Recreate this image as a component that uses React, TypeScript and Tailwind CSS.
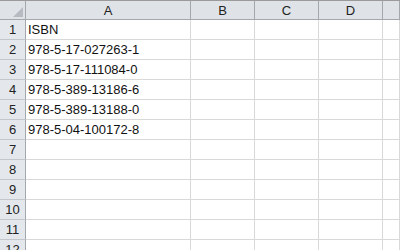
const cols = ["A", "B", "C", "D", ""];
const widths = ["w-[165px]", "w-[64px]", "w-[64px]", "w-[64px]", "flex-1"];

const rows: string[] = [
  "ISBN",
  "978-5-17-027263-1",
  "978-5-17-111084-0",
  "978-5-389-13186-6",
  "978-5-389-13188-0",
  "978-5-04-100172-8",
  "",
  "",
  "",
  "",
  "",
  "",
];

export default function App() {
  return (
    <div className="w-[400px] h-[250px] overflow-hidden bg-white font-['Liberation_Sans',Arial,sans-serif] text-[13px] text-[#111]">
      {/* Column headers */}
      <div className="flex h-[20px] border-t border-[#9a9a9a]">
        <div className="relative w-[26px] shrink-0 border-r border-b border-[#a3a8ae] bg-[#dfe3e8]">
          <svg className="absolute right-[2px] bottom-[2px]" width="10" height="10" viewBox="0 0 10 10">
            <polygon points="0,10 10,10 10,0" fill="#b6bbc1" />
          </svg>
        </div>
        {cols.map((c, i) => (
          <div
            key={i}
            className={`${widths[i]} shrink-0 flex items-center justify-center border-r border-b border-[#a3a8ae] bg-[#dfe3e8] text-[#222] leading-none`}
          >
            {c}
          </div>
        ))}
      </div>

      {/* Rows */}
      {rows.map((v, r) => (
        <div key={r} className="flex h-[20px]">
          <div className="w-[26px] shrink-0 flex items-center justify-center border-r border-b border-r-[#a3a8ae] border-b-[#c3c7cc] bg-[#e4e8ed] text-[#222] leading-none">
            {r + 1}
          </div>
          {cols.map((_, i) => (
            <div
              key={i}
              className={`${widths[i]} shrink-0 flex items-center pl-[2px] border-r border-b border-[#d9d9d9] whitespace-nowrap leading-none`}
            >
              {i === 0 ? v : ""}
            </div>
          ))}
        </div>
      ))}
    </div>
  );
}
